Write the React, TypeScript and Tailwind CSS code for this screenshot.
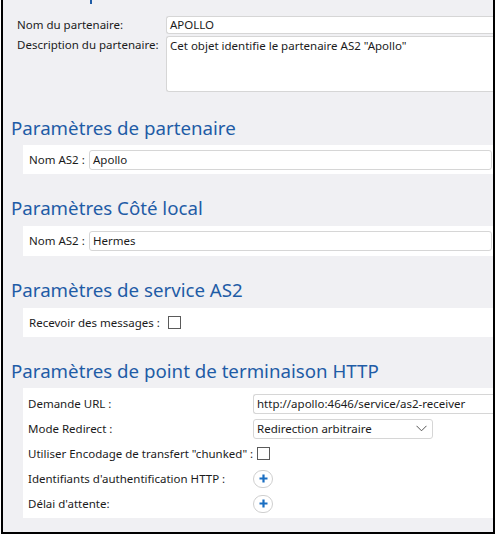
import React from "react";

const font = { fontFamily: '"Noto Sans", "Open Sans", sans-serif' };

function Heading({ children, className = "" }: { children: React.ReactNode; className?: string }) {
  return (
    <div className={"h-[24px] leading-[24px] pl-[8px] text-[18.7px] text-[#1f5ca6] whitespace-nowrap " + className}>
      {children}
    </div>
  );
}

function TextBox({ value, className = "" }: { value: string; className?: string }) {
  return (
    <div
      className={
        "h-[20px] leading-[18px] pl-[3px] bg-white border border-[#d6d6d6] rounded-[3px] text-[11.5px] text-[#1b1b1b] whitespace-nowrap overflow-hidden " +
        className
      }
    >
      {value}
    </div>
  );
}

function Checkbox() {
  return <div className="w-[13px] h-[13px] bg-white border border-[#5a5a5a]" />;
}

function PlusButton() {
  return (
    <div className="w-[20px] h-[18px] rounded-full bg-white border border-[#cfcfcf] flex items-center justify-center">
      <svg width="9" height="9" viewBox="0 0 9 9">
        <path d="M4.5 0.5v8M0.5 4.5h8" stroke="#1a6ec2" strokeWidth="2.2" />
      </svg>
    </div>
  );
}

export default function App() {
  return (
    <div className="w-[496px] h-[535px] bg-white" style={font}>
      <div className="ml-px w-[494px] h-[534px] border-x-2 border-b-2 border-black bg-[#f0f0f3] overflow-hidden flex flex-col">
        <div className="ml-[87px] w-[2px] h-[4px] bg-[#1f5ca6]" />
        {/* General */}
        <div className="mt-[12px] flex flex-col gap-[2px] text-[11.5px] text-[#1b1b1b]">
          <div className="flex items-center">
            <div className="w-[163px] pl-[14px] whitespace-nowrap">Nom du partenaire:</div>
            <TextBox value="APOLLO" className="flex-1 !h-[18px] !leading-[16px] border-r-0 rounded-r-none" />
          </div>
          <div className="flex items-start">
            <div className="w-[163px] pl-[14px] whitespace-nowrap leading-[18px]">Description du partenaire:</div>
            <div className="flex-1 h-[56px] bg-white border border-[#d6d6d6] border-r-0 rounded-l-[3px] pl-[3px] pt-[1px] leading-[16px] whitespace-nowrap overflow-hidden">
              Cet objet identifie le partenaire AS2 "Apollo"
            </div>
          </div>
        </div>

        <Heading className="mt-[24px]">Paramètres de partenaire</Heading>
        <div className="mt-[5px] ml-[20px] h-[29px] bg-white flex items-center pl-[6px] pr-[1px] text-[11.5px] text-[#1b1b1b]">
          <span className="w-[60px] whitespace-nowrap">Nom AS2 :</span>
          <TextBox value="Apollo" className="flex-1" />
        </div>

        <Heading className="mt-[22px]">Paramètres Côté local</Heading>
        <div className="mt-[6px] ml-[20px] h-[30px] bg-white flex items-center pl-[6px] pr-[1px] text-[11.5px] text-[#1b1b1b]">
          <span className="w-[60px] whitespace-nowrap">Nom AS2 :</span>
          <TextBox value="Hermes" className="flex-1" />
        </div>

        <Heading className="mt-[22px]">Paramètres de service AS2</Heading>
        <div className="mt-[6px] ml-[20px] h-[29px] bg-white flex items-center pl-[6px] text-[11.5px] text-[#1b1b1b]">
          <span className="whitespace-nowrap mr-[8px]">Recevoir des messages :</span>
          <Checkbox />
        </div>

        <Heading className="mt-[22px]">Paramètres de point de terminaison HTTP</Heading>
        <div className="mt-[5px] ml-[20px] bg-white pt-[3px] pb-[2px] pl-[5px] flex flex-col text-[11.5px] text-[#1b1b1b]">
          <div className="h-[25px] flex items-center">
            <span className="w-[225px] whitespace-nowrap">Demande URL :</span>
            <TextBox value="http://apollo:4646/service/as2-receiver" className="flex-1 border-r-0 rounded-r-none" />
          </div>
          <div className="h-[25px] flex items-center">
            <span className="w-[225px] whitespace-nowrap">Mode Redirect :</span>
            <div className="w-[180px] h-[20px] bg-white border border-[#d6d6d6] rounded-[3px] flex items-center justify-between pl-[3px] pr-[5px]">
              <span className="whitespace-nowrap">Redirection arbitraire</span>
              <svg width="11" height="7" viewBox="0 0 11 7">
                <path d="M0.5 0.8L5.5 5.8L10.5 0.8" fill="none" stroke="#555" strokeWidth="1" />
              </svg>
            </div>
          </div>
          <div className="h-[25px] flex items-center">
            <span className="w-[229px] whitespace-nowrap">Utiliser Encodage de transfert "chunked" :</span>
            <Checkbox />
          </div>
          <div className="h-[25px] flex items-center">
            <span className="w-[225px] whitespace-nowrap">Identifiants d'authentification HTTP :</span>
            <PlusButton />
          </div>
          <div className="h-[25px] flex items-center">
            <span className="w-[225px] whitespace-nowrap">Délai d'attente:</span>
            <PlusButton />
          </div>
        </div>
      </div>
    </div>
  );
}
